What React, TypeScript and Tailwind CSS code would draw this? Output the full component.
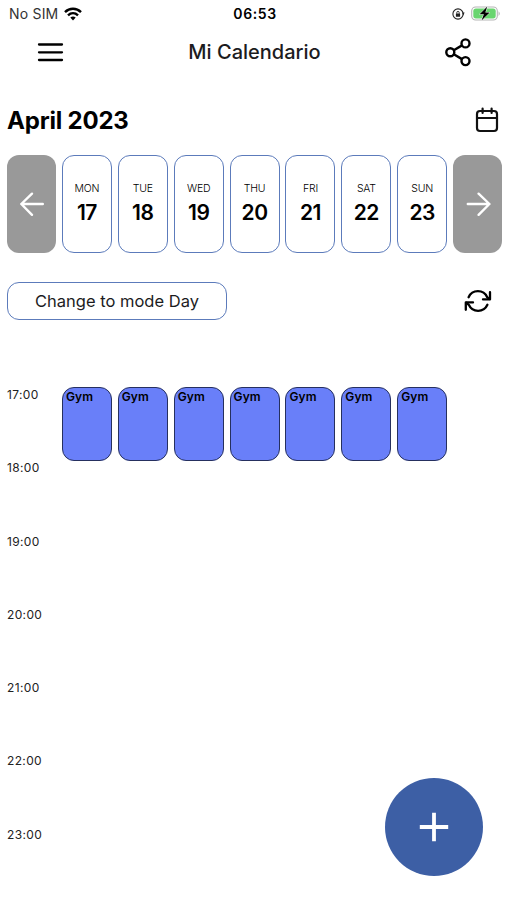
import { useState } from "react"

const week = [
  { name: "MON", day: 17 },
  { name: "TUE", day: 18 },
  { name: "WED", day: 19 },
  { name: "THU", day: 20 },
  { name: "FRI", day: 21 },
  { name: "SAT", day: 22 },
  { name: "SUN", day: 23 },
]

const hours = ["17:00", "18:00", "19:00", "20:00", "21:00", "22:00", "23:00"]

function StatusBar() {
  return (
    <div className="h-[27px] grid grid-cols-3 items-center pl-[9px] pr-[6px]">
      <div className="flex items-center gap-[6px]">
        <span className="text-[14px] tracking-[0.2px] text-[#333]">No SIM</span>
        <svg width="18" height="14" viewBox="0 0 18 14" fill="none" stroke="#000" strokeWidth="2.4">
          <path d="M1 5.1C5.5 0.7 12.5 0.7 17 5.1" />
          <path d="M4 8.3C7 5.5 11 5.5 14 8.3" />
          <path d="M6.3 10.6Q9 8.4 11.7 10.6L9 13.6Z" fill="#000" stroke="none" />
        </svg>
      </div>
      <span className="text-center text-[14px] font-semibold tracking-[0.6px]">06:53</span>
      <div className="flex items-center justify-end gap-[6px]">
        <svg width="13" height="12" viewBox="0 0 13 12" fill="none" stroke="#222">
          <circle cx="6" cy="6" r="5.1" strokeWidth="1.1" />
          <path d="M10.2 4.6L12.6 4.6L11.3 7.4Z" fill="#222" stroke="none" />
          <rect x="3.9" y="5.5" width="4.2" height="3.2" rx="0.5" fill="#222" stroke="none" />
          <path d="M4.8 5.7V4.6a1.2 1.2 0 0 1 2.4 0v1.1" strokeWidth="0.9" />
        </svg>
        <svg width="30" height="16" viewBox="0 0 30 16">
          <rect x="0.7" y="1" width="25.6" height="13" rx="4" fill="#fff" stroke="#b5b5b5" strokeWidth="1.1" />
          <rect x="2.3" y="2.6" width="22.4" height="9.8" rx="2.6" fill="#69d56f" />
          <path d="M27.6 5.3Q29.8 7.6 27.6 9.9Z" fill="#aaa" />
          <path d="M16.3 0.6L8.6 8.2H12.9L10.5 14.4L18.7 6.5H14.3Z" fill="#000" stroke="#fff" strokeWidth="1" paintOrder="stroke" />
        </svg>
      </div>
    </div>
  )
}

function Header() {
  return (
    <header className="h-[50px] grid grid-cols-[60px_1fr_60px] items-center pl-[34px] pr-[32px]">
      <svg width="32" height="32" viewBox="0 0 32 32" stroke="#000" strokeWidth="2.3" strokeLinecap="round">
        <path d="M5 8.5H28M5 16.3H28M5 24H28" />
      </svg>
      <h1 className="text-center text-[20px] font-medium text-[#1c1c1e]">Mi Calendario</h1>
      <svg className="justify-self-end" width="32" height="32" viewBox="0 0 32 32" fill="none" stroke="#000" strokeWidth="2.4">
        <circle cx="22.5" cy="7.4" r="4" />
        <circle cx="7.3" cy="16.2" r="4" />
        <circle cx="22.5" cy="25.1" r="4" />
        <path d="M10.8 14.2L19 9.4M10.8 18.2L19 23.1" />
      </svg>
    </header>
  )
}

function ArrowButton({ dir, onClick }: any) {
  return (
    <button onClick={onClick} className="h-[98px] rounded-[12px] bg-[#999] flex items-center justify-center">
      <svg width="26" height="26" viewBox="0 0 26 26" fill="none" stroke="#fff" strokeWidth="2.4" strokeLinecap="round" strokeLinejoin="round">
        {dir === "left" ? <path d="M13 2.7L2.3 13L13 23.8M2.3 13H23.8" /> : <path d="M13.6 2.7L24.4 13L13.6 23.8M24.4 13H2.8" />}
      </svg>
    </button>
  )
}

export default function App() {
  const [mode, setMode] = useState("Day")

  return (
    <div className="relative w-full h-[900px] overflow-hidden bg-white text-black font-['Inter',sans-serif]">
      <StatusBar />
      <Header />

      {/* Month */}
      <div className="h-[78px] flex items-center justify-between pt-[9px] px-[7px]">
        <h2 className="text-[24px] font-bold tracking-[-0.2px]">April 2023</h2>
        <svg width="26" height="28" viewBox="0 0 26 28" fill="none" stroke="#111" strokeWidth="2.2" strokeLinecap="round">
          <rect x="3" y="4" width="20" height="20" rx="3" />
          <path d="M3 11H23M8.6 1.6V6M17.6 1.6V6" />
        </svg>
      </div>

      {/* Week strip */}
      <div className="grid grid-cols-[49px_repeat(7,50px)_49px] gap-x-[5.9px] pl-[7px]">
        <ArrowButton dir="left" />
        {week.map((d) => (
          <div key={d.day} className="h-[98px] rounded-[12px] border-[1.5px] border-[#5c7bbb] flex flex-col items-center pt-[26px]">
            <span className="text-[10.5px] leading-[14px] font-light tracking-[-0.2px]">{d.name}</span>
            <span className="mt-[4px] text-[21px] leading-[26px] font-semibold tracking-[-0.5px]">{d.day}</span>
          </div>
        ))}
        <ArrowButton dir="right" />
      </div>

      <div className="mt-[29px] h-[38px] flex items-center justify-between pl-[7px] pr-[13px]">
        <button
          onClick={() => setMode(mode === "Day" ? "Week" : "Day")}
          className="w-[220px] h-[38px] rounded-[12px] border-[1.5px] border-[#5c7bbb] text-[16.5px] text-[#1c1c1e]"
        >
          Change to mode {mode}
        </button>
        <svg width="32" height="32" viewBox="0 0 32 32" fill="none" stroke="#000" strokeWidth="2.3" strokeLinecap="round" strokeLinejoin="round">
          <path d="M6.6 12.2A10.2 10.2 0 0 1 25.2 12.2L27.2 14" />
          <path d="M28 7.2V14.4H21" />
          <path d="M25.4 19.8A10.2 10.2 0 0 1 6.8 19.8L4.5 17.8" />
          <path d="M3.8 24.8V17.4H11" />
        </svg>
      </div>

      {/* Hours and events */}
      <div className="mt-[67px] grid grid-cols-[49px_repeat(7,50px)_49px] gap-x-[5.9px] pl-[7px]">
        <div>
          {hours.map((h) => (
            <div key={h} className="h-[73.3px] pt-px text-[12px] leading-[14px] tracking-[0.35px] text-[#222]">{h}</div>
          ))}
        </div>
        {week.map((d) => (
          <div key={d.day} className="h-[74px] rounded-[12px] border border-[#26305f] bg-[#697ff9] pl-[3px] pt-[1.5px] text-[12px] leading-[14px] font-semibold tracking-[0.1px]">
            Gym
          </div>
        ))}
      </div>

      {/* Add button floats over the schedule */}
      <button className="absolute left-[384.5px] top-[777.5px] size-[98px] rounded-full bg-[#3d5fa5] flex items-center justify-center">
        <svg width="30" height="30" viewBox="0 0 30 30" stroke="#fff" strokeWidth="3.8">
          <path d="M15 0.8V29.2M0.8 15H29.2" />
        </svg>
      </button>
    </div>
  )
}
